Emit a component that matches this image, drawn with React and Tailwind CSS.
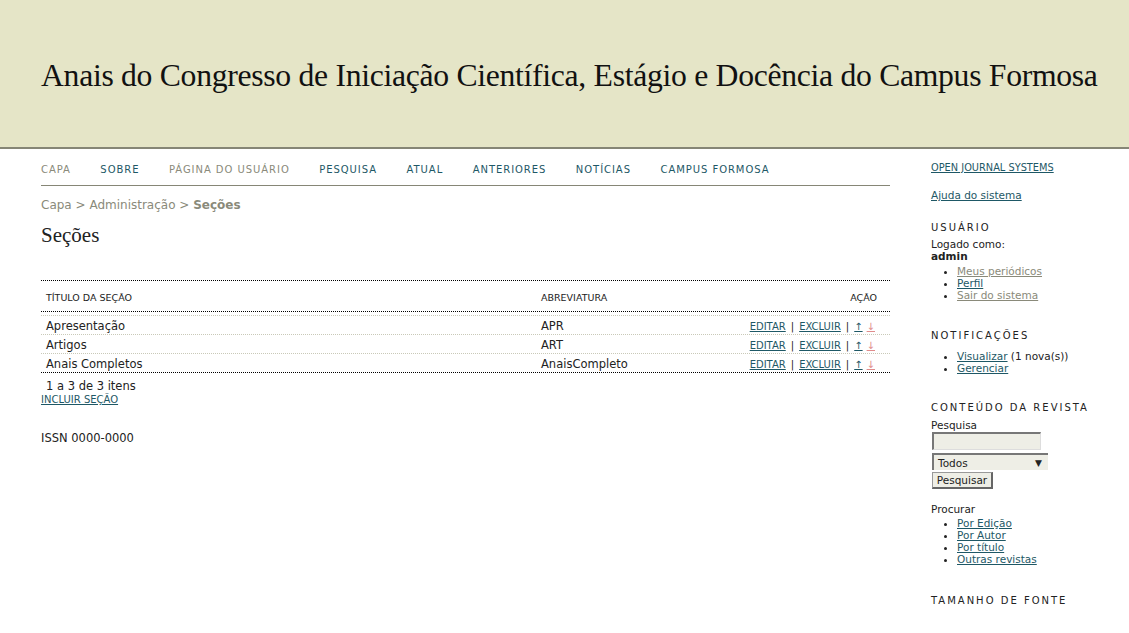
import React from "react";

const navItems = [
  { label: "Capa", visited: true },
  { label: "Sobre" },
  { label: "Página do usuário", visited: true },
  { label: "Pesquisa" },
  { label: "Atual" },
  { label: "Anteriores" },
  { label: "Notícias" },
  { label: "Campus Formosa" },
];

const sections = [
  { title: "Apresentação", abbrev: "APR" },
  { title: "Artigos", abbrev: "ART" },
  { title: "Anais Completos", abbrev: "AnaisCompleto" },
];

const linkCls = "text-[#1e5866] underline";
const visitedCls = "text-[#8a8a7a] underline";

const Block = ({ title, children, className = "" }) => (
  <div className={className}>
    <div className="text-[10px] leading-[12px] tracking-[2px] uppercase text-[#222]">{title}</div>
    {children}
  </div>
);

const App = () => {
  return (
    <div className="min-h-screen bg-white text-[#222]" style={{ fontFamily: '"DejaVu Sans", Verdana, sans-serif' }}>
      {/* header */}
      <div className="h-[149px] bg-[#e5e5c7] border-b-2 border-[#868676] flex items-start pl-[41px] pt-[57px]">
        <h1 className="text-[31.7px] leading-[38px] text-[#111] tracking-[-0.3px]" style={{ fontFamily: '"Liberation Serif", "Times New Roman", serif' }}>
          Anais do Congresso de Iniciação Científica, Estágio e Docência do Campus Formosa
        </h1>
      </div>

      <div className="flex pl-[41px]">
        {/* main */}
        <div className="w-[849px]">
          <div className="flex gap-[29.5px] pt-[15px] pb-[9px] border-b border-[#868676] text-[10px] leading-[12px] tracking-[0.95px] uppercase">
            {navItems.map((n) => (
              <span key={n.label} className={n.visited ? "text-[#8a8a7a]" : "text-[#1e5866]"}>
                {n.label}
              </span>
            ))}
          </div>

          <div className="mt-[11px] text-[12px] leading-[16px] text-[#8a8a7a]">
            Capa &gt; Administração &gt; <span className="font-bold">Seções</span>
          </div>

          <h2 className="mt-[9px] text-[21px] leading-[26px] text-[#222]" style={{ fontFamily: '"Liberation Serif", "Times New Roman", serif' }}>
            Seções
          </h2>

          <div className="mt-[32px] border-t border-dotted border-black">
            <div className="flex items-center h-[31px] pt-[4px] border-b border-dotted border-black text-[9.5px] uppercase">
              <div className="w-[500px] pl-[5px]">Título da seção</div>
              <div className="flex-1">Abreviatura</div>
              <div className="pr-[13px]">Ação</div>
            </div>
            <div className="h-[3px]" />
            {sections.map((s) => (
              <div key={s.title} className="flex items-center h-[19px] pt-[3px] border-t border-dotted border-[#c9c9b8] text-[11.5px]">
                <div className="w-[500px] pl-[5px]">{s.title}</div>
                <div className="flex-1">{s.abbrev}</div>
                <div className="pr-[15px] text-[10px] flex items-center gap-[5px]">
                  <span className={linkCls}>EDITAR</span>
                  <span className="text-[#222]">|</span>
                  <span className={linkCls}>EXCLUIR</span>
                  <span className="text-[#222]">|</span>
                  <span className="flex gap-[4px]">
                    <span className={linkCls}>↑</span>
                    <span className="text-[#e08c8c] underline">↓</span>
                  </span>
                </div>
              </div>
            ))}
            <div className="border-t border-dotted border-black pt-[7px] text-[11.5px] leading-[13px] pl-[5px]">
              1 a 3 de 3 itens
            </div>
            <div className={"text-[10px] leading-[13px] " + linkCls}>INCLUIR SEÇÃO</div>
          </div>

          <div className="mt-[26px] text-[11.5px] leading-[13px]">ISSN 0000-0000</div>
        </div>

        {/* sidebar */}
        <div className="ml-[41px] w-[170px] text-[10.5px] leading-[12px]">
          <div className={"mt-[13px] text-[9.8px] " + linkCls}>OPEN JOURNAL SYSTEMS</div>
          <div className={"mt-[15px] " + linkCls}>Ajuda do sistema</div>

          <Block title="Usuário" className="mt-[21px]">
            <div className="mt-[4px]">Logado como:</div>
            <div className="font-bold">admin</div>
            <ul className="list-disc pl-[26px] mt-[3px]">
              <li><span className={visitedCls}>Meus periódicos</span></li>
              <li><span className={linkCls}>Perfil</span></li>
              <li><span className={visitedCls}>Sair do sistema</span></li>
            </ul>
          </Block>

          <Block title="Notificações" className="mt-[29px]">
            <ul className="list-disc pl-[26px] mt-[8px]">
              <li><span className={linkCls}>Visualizar</span> (1 nova(s))</li>
              <li><span className={linkCls}>Gerenciar</span></li>
            </ul>
          </Block>

          <Block title="Conteúdo da revista" className="mt-[28px]">
            <div className="mt-[5px]">Pesquisa</div>
            <div className="mt-[1px] ml-[1px] w-[109px] h-[18px] bg-[#eeeee6] border-t-2 border-l-2 border-[#777] border-b border-r border-b-[#ddd] border-r-[#ddd]" />
            <div className="mt-[3px] ml-[1px] w-[116px] h-[17px] bg-[#eeeee6] border-t-2 border-l-2 border-[#777] flex items-center justify-between pl-[4px] pr-[6px] text-[10.5px]">
              <span>Todos</span>
              <span className="text-[9px]">▼</span>
            </div>
            <div className="mt-[2px] ml-[1px] w-[61px] h-[17px] bg-[#eeeee6] border border-b-2 border-r-2 border-[#999] border-b-[#666] border-r-[#666] flex items-center justify-center text-[10.5px]">
              Pesquisar
            </div>
            <div className="mt-[14px]">Procurar</div>
            <ul className="list-disc pl-[26px] mt-[2px]">
              <li><span className={linkCls}>Por Edição</span></li>
              <li><span className={linkCls}>Por Autor</span></li>
              <li><span className={linkCls}>Por título</span></li>
              <li><span className={linkCls}>Outras revistas</span></li>
            </ul>
          </Block>

          <Block title="Tamanho de fonte" className="mt-[30px]" />
        </div>
      </div>
    </div>
  );
};

export default App;
